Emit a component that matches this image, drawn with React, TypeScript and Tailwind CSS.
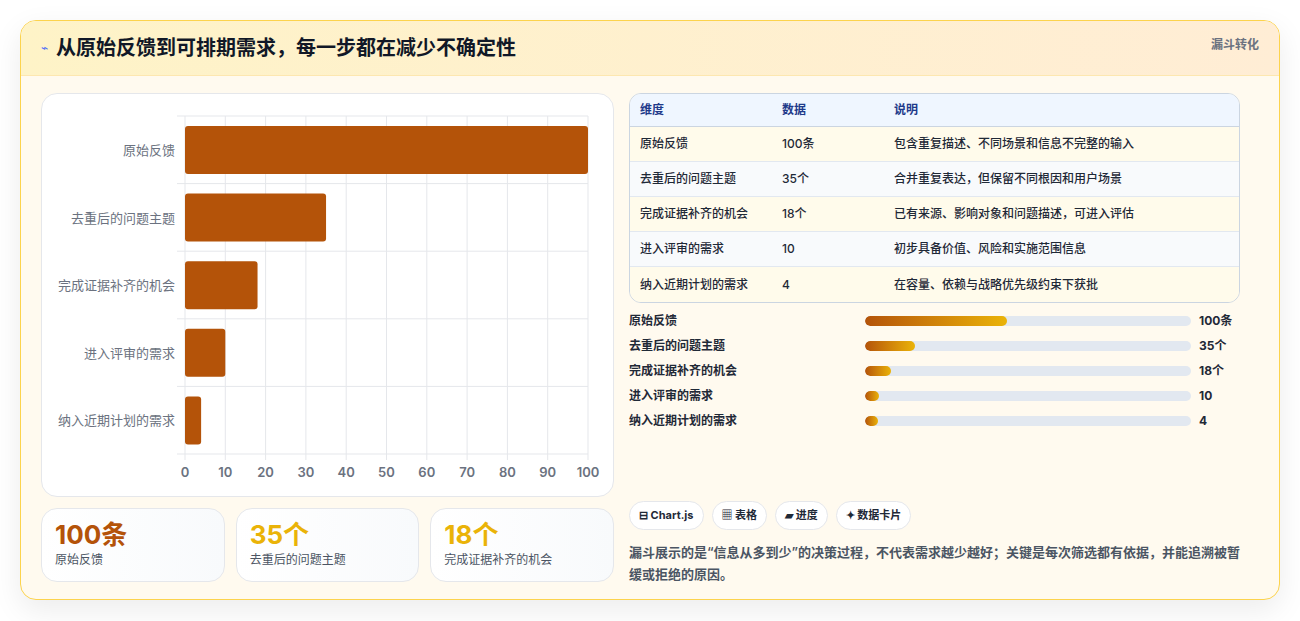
import React from "react";

const rows = [
  { name: "原始反馈", v: 100, label: "100条", desc: "包含重复描述、不同场景和信息不完整的输入" },
  { name: "去重后的问题主题", v: 35, label: "35个", desc: "合并重复表达，但保留不同根因和用户场景" },
  { name: "完成证据补齐的机会", v: 18, label: "18个", desc: "已有来源、影响对象和问题描述，可进入评估" },
  { name: "进入评审的需求", v: 10, label: "10", desc: "初步具备价值、风险和实施范围信息" },
  { name: "纳入近期计划的需求", v: 4, label: "4", desc: "在容量、依赖与战略优先级约束下获批" },
];

function Chart() {
  const x0 = 143, x1 = 546, top = 22, rowH = 67.6;
  return (
    <svg width="572" height="403" className="block">
      {Array.from({ length: 11 }).map((_, i) => {
        const x = x0 + ((x1 - x0) * i) / 10;
        return (
          <g key={i}>
            <line x1={x} y1={top} x2={x} y2={top + rowH * 5 + 6} stroke="#e5e7eb" />
            <text x={x} y={top + rowH * 5 + 23} textAnchor="middle" fontSize="13" fill="#6b7280" fontWeight="600">{i * 10}</text>
          </g>
        );
      })}
      {Array.from({ length: 6 }).map((_, i) => (
        <line key={i} x1={x0 - 8} y1={top + rowH * i} x2={x1} y2={top + rowH * i} stroke="#e5e7eb" />
      ))}
      {rows.map((r, i) => {
        const y = top + rowH * i + 10;
        return (
          <g key={r.name}>
            <text x={x0 - 10} y={y + 29} textAnchor="end" fontSize="13" fill="#6b7280">{r.name}</text>
            <rect x={x0} y={y} width={((x1 - x0) * r.v) / 100} height={48} rx={3} fill="#b45309" />
          </g>
        );
      })}
    </svg>
  );
}

export default function App() {
  return (
    <div className="w-[1300px] h-[621px] bg-white p-5 pb-0" style={{ fontFamily: "Inter, 'Noto Sans CJK SC', sans-serif" }}>
      <div className="rounded-2xl border border-[#fcd34d] bg-[#fffaef] overflow-hidden shadow-[0_10px_30px_rgba(0,0,0,0.08)] h-[580px]">
        <div className="h-[55px] flex items-center justify-between px-5 bg-gradient-to-r from-[#fef3c7] to-[#ffedd5] border-b border-[#fde7b0]">
          <div className="flex items-center gap-2">
            <span className="text-[#4f6ef7] text-xs">⌁</span>
            <span className="text-[20px] font-bold text-[#111827]">从原始反馈到可排期需求，每一步都在减少不确定性</span>
          </div>
          <span className="self-start mt-4 text-xs font-bold text-[#6b7280]">漏斗转化</span>
        </div>
        <div className="flex gap-[15px] px-5 pt-[17px]">
          <div className="w-[573px] flex flex-col gap-[11px]">
            <div className="h-[404px] rounded-2xl bg-white border border-[#e5e7eb]">
              <Chart />
            </div>
            <div className="grid grid-cols-3 gap-[11px]">
              {[["100条", "原始反馈", "#b45309"], ["35个", "去重后的问题主题", "#eab308"], ["18个", "完成证据补齐的机会", "#eab308"]].map(([a, b, c]) => (
                <div key={b} className="h-[74px] rounded-2xl border border-[#e5e7eb] bg-gradient-to-r from-white to-[#f8fafc] px-[13px] pt-[9px]">
                  <div className="text-[26px] font-bold leading-[34px]" style={{ color: c }}>{a}</div>
                  <div className="text-xs text-[#4b5563]">{b}</div>
                </div>
              ))}
            </div>
          </div>
          <div className="flex-1 flex flex-col">
            <div className="rounded-xl border border-[#cbd5e1] overflow-hidden text-xs mr-[19px]">
              <div className="flex h-[33px] items-center bg-[#eff6ff] font-bold text-[#1e3a8a] border-b border-[#cbd5e1]">
                <div className="w-[152px] pl-[10px]">维度</div><div className="w-[112px]">数据</div><div>说明</div>
              </div>
              {rows.map((r, i) => (
                <div key={r.name} className={`flex h-[35px] items-center text-[#1f2937] font-medium ${i < 4 ? "border-b border-[#e2e8f0]" : ""} ${i % 2 ? "bg-[#f8fafc]" : "bg-[#fffbeb]"}`}>
                  <div className="w-[152px] pl-[10px]">{r.name}</div><div className="w-[112px]">{r.label}</div><div>{r.desc}</div>
                </div>
              ))}
            </div>
            <div className="mt-[9px] flex flex-col gap-[8px]">
              {rows.map((r) => (
                <div key={r.name} className="flex items-center h-[17px] text-xs font-bold text-[#1f2937]">
                  <div className="w-[236px]">{r.name}</div>
                  <div className="w-[326px] h-[10px] rounded-full bg-[#e2e8f0] overflow-hidden">
                    <div className="h-full rounded-full bg-gradient-to-r from-[#b45309] to-[#eab308]" style={{ width: `${Math.max(r.v * 0.435, 4)}%` }} />
                  </div>
                  <div className="ml-2">{r.label}</div>
                </div>
              ))}
            </div>
            <div className="mt-[72px] flex gap-2 text-[11px] font-bold text-[#1f2937]">
              {["⊟ Chart.js", "▦ 表格", "▰ 进度", "✦ 数据卡片"].map((t) => (
                <span key={t} className="h-[29px] px-[9px] flex items-center rounded-full border border-[#e5e7eb] bg-white">{t}</span>
              ))}
            </div>
            <p className="mt-[11px] text-[13px] leading-[22px] font-semibold text-[#4b5563] pr-4">漏斗展示的是“信息从多到少”的决策过程，不代表需求越少越好；关键是每次筛选都有依据，并能追溯被暂缓或拒绝的原因。</p>
          </div>
        </div>
      </div>
    </div>
  );
}
